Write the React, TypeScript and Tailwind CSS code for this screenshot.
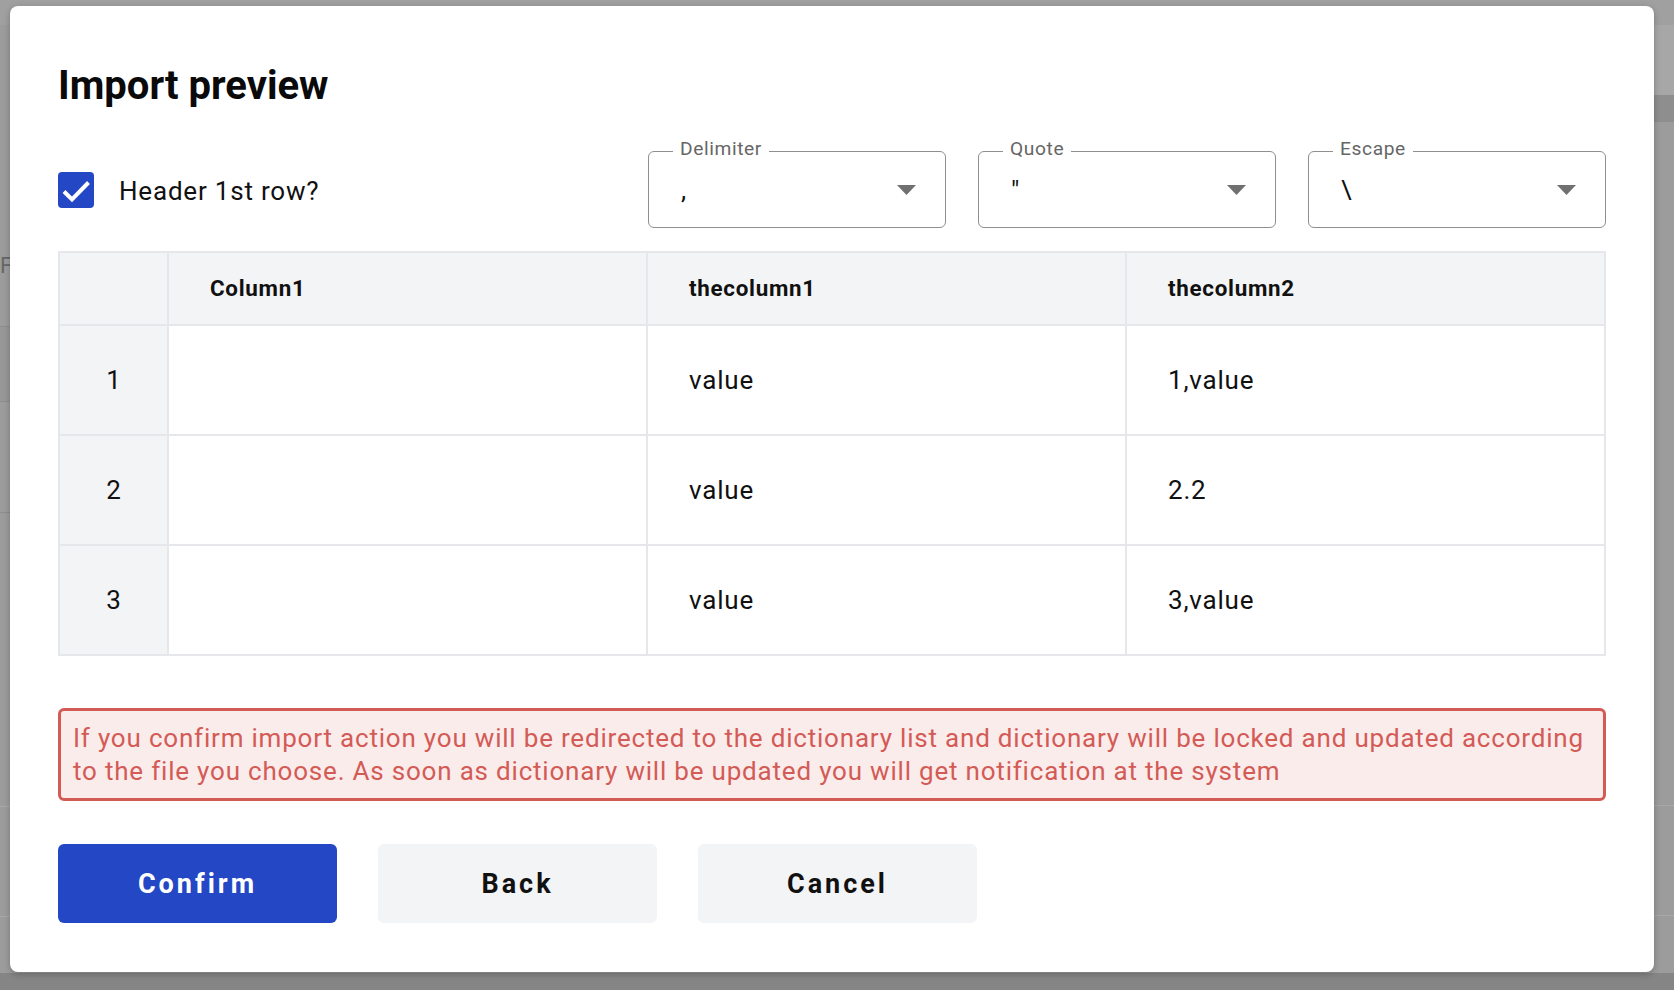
import React from 'react';

const columns = ['Column1', 'thecolumn1', 'thecolumn2'];

const rows = [
  { n: 1, cells: ['', 'value', '1,value'] },
  { n: 2, cells: ['', 'value', '2.2'] },
  { n: 3, cells: ['', 'value', '3,value'] },
];

const selects = [
  { label: 'Delimiter', value: ',' },
  { label: 'Quote', value: '"' },
  { label: 'Escape', value: '\\' },
];

const SelectBox: React.FC<{ label: string; value: string }> = ({ label, value }) => (
  <div className="relative flex h-[77px] w-[298px] items-center justify-between rounded-[6px] border-[1.5px] border-[#8f8f8f] pl-[32px] pr-[29px]">
    <span className="absolute left-[24px] top-[-13px] bg-white px-[7px] text-[19.2px] leading-none tracking-[0.6px] text-[#666666]">
      {label}
    </span>
    <span className="text-[26px] leading-[30px] text-[#111111]">{value}</span>
    <svg width="19" height="10" viewBox="0 0 19 10">
      <polygon points="0,0 19,0 9.5,10" fill="#707070" />
    </svg>
  </div>
);

export default function App() {
  return (
    <div className="relative h-[990px] w-[1674px] overflow-hidden bg-[#9c9c9c] font-['Roboto',sans-serif]">
      {/* dimmed page behind the dialog */}
      <div className="flex h-full flex-col">
        <div className="h-[25px] shrink-0 bg-[#a0a0a0]" />
        <div className="flex flex-1">
          <div className="flex w-[40px] flex-col">
            <div className="h-[229px]" />
            <div className="text-[22px] leading-[24px] text-[#676767]">F</div>
            <div className="h-[49px] border-b border-[#8d8d8d]" />
            <div className="h-[75px] border-b border-[#8d8d8d] bg-[#979797]" />
            <div className="h-[111px] border-b border-[#8d8d8d]" />
            <div className="h-[294px] border-b border-[#a8a8a8]" />
            <div className="h-[110px] border-b border-[#a8a8a8]" />
          </div>
          <div className="flex-1" />
          <div className="flex w-[40px] flex-col">
            <div className="h-[70px] bg-[#a7a7a7]" />
            <div className="h-[27px] rounded-l-[8px] bg-[#8e8e8e]" />
            <div className="h-[684px] border-b border-[#a8a8a8]" />
            <div className="h-[110px] border-b border-[#a8a8a8]" />
          </div>
        </div>
        <div className="h-[17px] shrink-0 bg-[#858585]" />
      </div>

      {/* dialog */}
      <div className="absolute left-[10px] top-[6px] flex h-[966px] w-[1644px] flex-col rounded-[8px] bg-white px-[48px] pt-[56px] shadow-[0_2px_6px_rgba(0,0,0,0.25)]">
        <h1 className="text-[40px] font-bold leading-[48px] text-[#0a0a0a]">Import preview</h1>

        <div className="mt-[41px] flex h-[77px] items-center justify-between">
          <label className="flex items-center gap-[25px]">
            <span className="flex h-[36px] w-[36px] items-center justify-center rounded-[4px] bg-[#2347c5]">
              <svg width="36" height="36" viewBox="0 0 36 36">
                <polyline
                  points="6,19.5 14,27.5 30.5,10.5"
                  fill="none"
                  stroke="white"
                  strokeWidth="4"
                />
              </svg>
            </span>
            <span className="pt-[4px] text-[26px] tracking-[0.8px] text-[#111111]">Header 1st row?</span>
          </label>
          <div className="flex gap-[32px]">
            {selects.map((s) => (
              <SelectBox key={s.label} label={s.label} value={s.value} />
            ))}
          </div>
        </div>

        <div className="mt-[23px] grid grid-cols-[109px_1fr_1fr_1fr] border-l-2 border-t-2 border-[#e5e7eb]">
          <div className="h-[73px] border-b-2 border-r-2 border-[#e5e7eb] bg-[#f3f4f6]" />
          {columns.map((c) => (
            <div
              key={c}
              className="flex h-[73px] items-center border-b-2 border-r-2 border-[#e5e7eb] bg-[#f3f4f6] pl-[41px] text-[22.4px] font-bold tracking-[0.7px] text-[#111111]"
            >
              {c}
            </div>
          ))}
          {rows.map((r) => (
            <React.Fragment key={r.n}>
              <div className="flex h-[110px] items-center justify-center border-b-2 border-r-2 border-[#e5e7eb] bg-[#f3f4f6] text-[26px] text-[#111111]">
                {r.n}
              </div>
              {r.cells.map((v, i) => (
                <div
                  key={i}
                  className="flex h-[110px] items-center border-b-2 border-r-2 border-[#e5e7eb] bg-white pl-[41px] text-[26px] tracking-[0.8px] text-[#111111]"
                >
                  {v}
                </div>
              ))}
            </React.Fragment>
          ))}
        </div>

        <div className="mt-[52px] rounded-[6px] border-[3px] border-[#d35b56] bg-[#fbecec] px-[12px] pb-[10px] pt-[11px] text-[26px] leading-[33px] tracking-[0.8px] text-[#d35b56]">
          If you confirm import action you will be redirected to the dictionary list and dictionary will be locked and updated according to the file you choose. As soon as dictionary will be updated you will get notification at the system
        </div>

        <div className="mt-[43px] flex gap-[41px]">
          <button className="h-[79px] w-[279px] rounded-[6px] bg-[#2347c5] pt-[2px] text-[27px] font-bold tracking-[3px] text-white">
            Confirm
          </button>
          <button className="h-[79px] w-[279px] rounded-[6px] bg-[#f3f4f6] pt-[2px] text-[27px] font-bold tracking-[3px] text-[#111111]">
            Back
          </button>
          <button className="h-[79px] w-[279px] rounded-[6px] bg-[#f3f4f6] pt-[2px] text-[27px] font-bold tracking-[3px] text-[#111111]">
            Cancel
          </button>
        </div>
      </div>
    </div>
  );
}
